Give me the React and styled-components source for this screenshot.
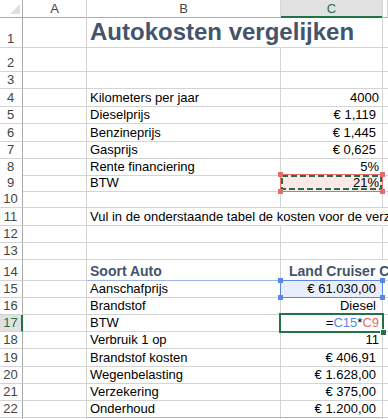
import React from "react";
import styled, { createGlobalStyle } from "styled-components";

const GRID = "#d4d4d4";
const HEAD_LINE = "#ababab";
const GREEN = "#217346";
const BLUE = "#5b86e5";
const RED = "#e36c6c";
const TABLE_LINE = "#9bb7e4";
const COLS = "23px 64px 194px 102px 1fr";

const GlobalStyle = createGlobalStyle`
  html, body {
    margin: 0;
    padding: 0;
    background: #fff;
    overflow: hidden;
  }
  body {
    font-family: "Liberation Sans", Arial, sans-serif;
  }
`;

const Sheet = styled.div`
  width: 388px;
  height: 419px;
  overflow: hidden;
  color: #000;
`;

const Line = styled.div`
  display: grid;
  grid-template-columns: ${COLS};
  height: ${(p) => p.$h}px;
`;

const Corner = styled.div`
  position: relative;
  border-right: 1px solid ${HEAD_LINE};
  border-bottom: 1px solid ${HEAD_LINE};
  box-sizing: border-box;

  &::after {
    content: "";
    position: absolute;
    right: 2px;
    bottom: 3px;
    width: 0;
    height: 0;
    border-left: 10px solid transparent;
    border-bottom: 10px solid #dfdfdf;
  }
`;

const ColHead = styled.div`
  box-sizing: border-box;
  display: flex;
  align-items: center;
  justify-content: center;
  font-size: 13px;
  color: ${(p) => (p.$active ? GREEN : "#444")};
  background: ${(p) => (p.$active ? "#e1e1e1" : "#fff")};
  border-right: 1px solid ${GRID};
  border-bottom: ${(p) => (p.$active ? `2px solid ${GREEN}` : `1px solid ${HEAD_LINE}`)};
  padding-top: ${(p) => (p.$active ? "1px" : "0")};
`;

const RowHead = styled.div`
  box-sizing: border-box;
  display: flex;
  align-items: flex-end;
  justify-content: center;
  padding-bottom: 1px;
  font-size: 13px;
  color: ${(p) => (p.$active ? GREEN : "#444")};
  background: ${(p) => (p.$active ? "#e1e1e1" : "#fff")};
  border-right: ${(p) => (p.$active ? `2px solid ${GREEN}` : `1px solid ${HEAD_LINE}`)};
  border-bottom: 1px solid ${GRID};
  padding-right: ${(p) => (p.$active ? "0" : "1px")};
`;

const Cell = styled.div`
  box-sizing: border-box;
  position: relative;
  display: flex;
  align-items: flex-end;
  justify-content: ${(p) => (p.$right ? "flex-end" : "flex-start")};
  padding: 0 ${(p) => p.$pr ?? 3}px 1px ${(p) => p.$pl ?? 3}px;
  font-size: 13px;
  white-space: nowrap;
  overflow: visible;
  border-right: 1px solid ${(p) => (p.$noRight ? "transparent" : GRID)};
  border-bottom: 1px solid ${(p) => p.$bottom || GRID};
`;

const Value = styled.span`
  position: relative;
  z-index: 2;
`;

const Title = styled.span`
  font-size: 24px;
  font-weight: bold;
  color: #44546a;
  line-height: 28px;
`;

const Heading = styled.span`
  font-size: 14px;
  font-weight: bold;
  color: #44546a;
`;

const Ref = styled.span`
  color: ${(p) => p.$color};
`;

const RefBox = styled.div`
  position: absolute;
  inset: -1px;
  border: 1px solid ${(p) => p.$color};
  background: ${(p) => p.$fill};
  z-index: 1;
`;

const Handle = styled.span`
  position: absolute;
  width: 5px;
  height: 5px;
  background: ${(p) => p.$color};
  ${(p) => (p.$top ? "top: -3px;" : "bottom: -3px;")}
  ${(p) => (p.$left ? "left: -3px;" : "right: -3px;")}
`;

const Ants = styled.svg`
  position: absolute;
  inset: 0;
  width: 100%;
  height: 100%;
`;

const ActiveBox = styled.div`
  position: absolute;
  top: -2px;
  left: -2px;
  right: -2px;
  bottom: -2px;
  border: 2px solid ${GREEN};
  z-index: 1;

  &::after {
    content: "";
    position: absolute;
    right: -4px;
    bottom: -4px;
    width: 5px;
    height: 5px;
    background: ${GREEN};
    border-left: 1px solid #fff;
    border-top: 1px solid #fff;
  }
`;

const Handles = ({ color }) => (
  <>
    <Handle $color={color} $top $left />
    <Handle $color={color} $top />
    <Handle $color={color} $left />
    <Handle $color={color} />
  </>
);

const rows = [
  { n: 1, h: 31, b: <Title>Autokosten vergelijken</Title>, bOpen: true },
  { n: 2, h: 24 },
  { n: 3, h: 17 },
  { n: 4, h: 18, b: "Kilometers per jaar", c: "4000" },
  { n: 5, h: 17, b: "Dieselprijs", c: "€ 1,119", pr: 6 },
  { n: 6, h: 18, b: "Benzineprijs", c: "€ 1,445", pr: 6 },
  { n: 7, h: 17, b: "Gasprijs", c: "€ 0,625", pr: 6 },
  { n: 8, h: 16, b: "Rente financiering", c: "5%" },
  { n: 9, h: 16, b: "BTW", c: "21%", mark: "copy" },
  { n: 10, h: 17 },
  {
    n: 11,
    h: 18,
    b: "Vul in de onderstaande tabel de kosten voor de verzekering, wegenbelasting en onderhoud",
    bOpen: true,
    cOpen: true,
  },
  { n: 12, h: 17 },
  { n: 13, h: 17 },
  {
    n: 14,
    h: 21,
    b: <Heading>Soort Auto</Heading>,
    c: <Heading>Land Cruiser Colorado</Heading>,
    cLeft: true,
    cOpen: true,
    line: TABLE_LINE,
  },
  { n: 15, h: 17, b: "Aanschafprijs", c: "€ 61.030,00", pr: 6, mark: "ref" },
  { n: 16, h: 17, b: "Brandstof", c: "Diesel", pr: 6 },
  {
    n: 17,
    h: 17,
    b: "BTW",
    c: (
      <>
        =<Ref $color={BLUE}>C15</Ref>*<Ref $color={RED}>C9</Ref>
      </>
    ),
    mark: "active",
  },
  { n: 18, h: 17, b: "Verbruik 1 op", c: "11" },
  { n: 19, h: 18, b: "Brandstof kosten", c: "€ 406,91", pr: 6 },
  { n: 20, h: 17, b: "Wegenbelasting", c: "€ 1.628,00", pr: 6 },
  { n: 21, h: 17, b: "Verzekering", c: "€ 375,00", pr: 6 },
  { n: 22, h: 17, b: "Onderhoud", c: "€ 1.200,00", pr: 6, line: TABLE_LINE },
];

const Overlay = ({ mark }) => {
  if (mark === "copy")
    return (
      <RefBox $color={RED} $fill="#fce8e8">
        <Ants>
          <rect
            x="1"
            y="1"
            width="99"
            height="13"
            fill="none"
            stroke={GREEN}
            strokeWidth="2"
            strokeDasharray="6 3"
          />
        </Ants>
        <Handles color={RED} />
      </RefBox>
    );
  if (mark === "ref")
    return (
      <RefBox $color={BLUE} $fill="#e8eefb">
        <Handles color={BLUE} />
      </RefBox>
    );
  if (mark === "active") return <ActiveBox />;
  return null;
};

const SheetRow = ({ row }) => (
  <Line $h={row.h}>
    <RowHead $active={row.n === 17}>{row.n}</RowHead>
    <Cell />
    <Cell $noRight={row.bOpen} $bottom={row.line}>
      {row.b && <Value>{row.b}</Value>}
    </Cell>
    <Cell
      $noRight={row.cOpen}
      $right={!row.cLeft}
      $pl={row.cLeft ? 8 : 3}
      $pr={row.pr ?? 3}
      $bottom={row.line}
    >
      {row.mark && <Overlay mark={row.mark} />}
      {row.c && <Value>{row.c}</Value>}
    </Cell>
    <Cell />
  </Line>
);

export default function App() {
  return (
    <>
      <GlobalStyle />
      <Sheet>
        <Line $h={17}>
          <Corner />
          <ColHead>A</ColHead>
          <ColHead>B</ColHead>
          <ColHead $active>C</ColHead>
          <ColHead />
        </Line>
        {rows.map((row) => (
          <SheetRow key={row.n} row={row} />
        ))}
        <Line $h={17}>
          <RowHead />
          <Cell />
          <Cell />
          <Cell />
          <Cell />
        </Line>
      </Sheet>
    </>
  );
}
